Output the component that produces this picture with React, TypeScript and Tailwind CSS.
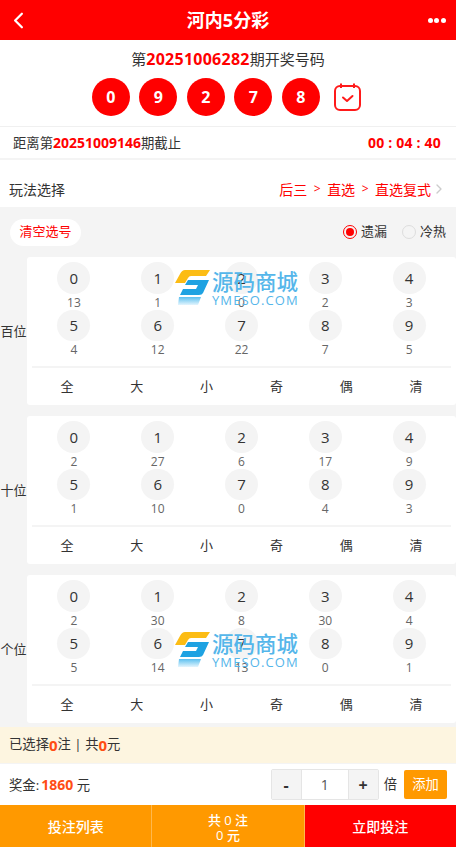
import { ChevronLeft, ChevronRight } from 'lucide-react';

const balls = ['0', '9', '2', '7', '8'];
const actions = ['全', '大', '小', '奇', '偶', '清'];

const positions = [
  { name: '百位', miss: ['13', '1', '0', '2', '3', '4', '12', '22', '7', '5'] },
  { name: '十位', miss: ['2', '27', '6', '17', '9', '1', '10', '0', '4', '3'] },
  { name: '个位', miss: ['2', '30', '8', '30', '4', '5', '14', '13', '0', '1'] },
];

function Watermark({ className, id }: { className: string; id: string }) {
  return (
    <div className={`absolute left-[174px] flex items-start ${className}`}>
      <svg width="37" height="36" viewBox="0 0 37 36">
        <defs>
          <linearGradient id={id} x1="0" y1="0" x2="0" y2="1">
            <stop offset="0" stopColor="#5cc0f0" />
            <stop offset="1" stopColor="#e4f5fd" />
          </linearGradient>
        </defs>
        <path d="M11 0H36L32 6H17Q15 6 14 8L11 13H1L6 4Q8 0 11 0Z" fill="#fcbc14" />
        <path d="M14 10H35L29 23Q28 25 25 25H6L9 19H22L24 15H11Z" fill="#1ea2e2" />
        <path d="M5 27H27L24 35H4Z" fill={`url(#${id})`} />
      </svg>
      <div className="ml-px flex flex-col text-[#55b6ea]">
        <span className="text-[21.5px] leading-[23px] font-medium whitespace-nowrap">源码商城</span>
        <span className="mt-px text-[13px] leading-[12px] tracking-[1.1px] whitespace-nowrap">YMESO.COM</span>
      </div>
    </div>
  );
}

function PositionRow({ name, miss }: { name: string; miss: string[] }) {
  return (
    <div className="flex h-[148px] items-stretch">
      <div className="flex w-[27px] items-center justify-center pt-[2px] text-[13px] whitespace-nowrap text-[#333]">{name}</div>
      <div className="flex flex-1 flex-col rounded-[3px] bg-white px-[5px]">
        <div className="grid h-[109px] grid-cols-5 content-start pt-[5px]">
          {miss.map((value, i) => (
            <div key={i} className="flex h-[47.5px] flex-col items-center">
              <div className="flex h-[33px] w-[33px] items-center justify-center rounded-full bg-[#f4f4f4] text-[15px] text-[#333]">
                {i}
              </div>
              <div className="mt-[2px] text-[12px] leading-[14px] text-[#666]">{value}</div>
            </div>
          ))}
        </div>
        <div className="grid flex-1 grid-cols-6 items-center border-t-2 border-[#f4f4f4] text-center text-[13px] text-[#333]">
          {actions.map((a) => (
            <div key={a}>{a}</div>
          ))}
        </div>
      </div>
    </div>
  );
}

export default function App() {
  return (
    <div className="relative h-[847px] w-[456px] overflow-hidden bg-white font-['Open_Sans','Noto_Sans_CJK_SC',sans-serif] text-[#333]">
      <header className="flex h-10 items-center justify-between bg-[#ff0000] px-[5px] text-white">
        <ChevronLeft className="h-[27px] w-[27px]" strokeWidth={2} />
        <h1 className="text-[18px] font-bold">河内5分彩</h1>
        <div className="flex w-[27px] items-center justify-end gap-[1.5px] pr-[5px]">
          <span className="h-[5px] w-[5px] shrink-0 rounded-full bg-white" />
          <span className="h-[5px] w-[5px] shrink-0 rounded-full bg-white" />
          <span className="h-[5px] w-[5px] shrink-0 rounded-full bg-white" />
        </div>
      </header>

      <section className="flex h-[87px] flex-col items-center border-b border-[#f0f0f0] pt-[8px]">
        <div className="text-[15px] leading-[22px]">
          第<span className="text-[16px] font-bold tracking-[0.25px] text-[#ff0000]">20251006282</span>期开奖号码
        </div>
        <div className="mt-[8px] flex items-center gap-[9.5px] pr-[2px]">
          {balls.map((b, i) => (
            <div key={i} className="flex h-[38px] w-[38px] items-center justify-center rounded-full bg-[#ff0000] text-[16px] font-bold text-white">
              {b}
            </div>
          ))}
          <svg width="29" height="30" viewBox="0 0 29 30" fill="none" stroke="#ff1a1a" strokeWidth="2" className="ml-[4px]">
            <rect x="2" y="4" width="25" height="24" rx="5" />
            <path d="M8 1.5V6M21 1.5V6" />
            <path d="M10 15.5L14 19L19.5 14" strokeLinecap="round" strokeLinejoin="round" />
          </svg>
        </div>
      </section>

      <section className="flex h-[33px] items-center justify-between border-b-2 border-[#f4f4f4] pr-[15px] pl-[13px] text-[13.33px]">
        <div>
          距离第<span className="text-[14px] font-bold text-[#ff0000]">20251009146</span>期截止
        </div>
        <div className="text-[14px] font-bold tracking-[0.2px] text-[#ff0000]">00 : 04 : 40</div>
      </section>

      <section className="flex h-[47px] items-center justify-between pt-[11px] pr-[9px] pl-[9px] text-[14px]">
        <span>玩法选择</span>
        <span className="flex items-center text-[#ff0000]">
          后三<span className="mx-[6.5px] text-[12px]">&gt;</span>直选<span className="mx-[6.5px] text-[12px]">&gt;</span>直选复式
          <ChevronRight className="h-[16px] w-[16px] text-[#ccc]" strokeWidth={2} />
        </span>
      </section>

      <main className="h-[520px] bg-[#f4f4f4]">
        <div className="flex h-[50px] items-center justify-between pr-[10px] pl-[10px] text-[13px]">
          <div className="flex h-[27px] w-[71px] items-center justify-center rounded-full bg-white text-[#ff0000]">清空选号</div>
          <div className="flex items-center">
            <span className="flex h-[14px] w-[14px] items-center justify-center rounded-full border border-[#ff0000]">
              <span className="h-[8px] w-[8px] rounded-full bg-[#ff0000]" />
            </span>
            <span className="ml-[4px]">遗漏</span>
            <span className="ml-[15px] h-[14px] w-[14px] rounded-full border border-[#ddd]" />
            <span className="ml-[4px]">冷热</span>
          </div>
        </div>
        <div className="flex flex-col gap-[11px]">
          {positions.map((p) => (
            <PositionRow key={p.name} name={p.name} miss={p.miss} />
          ))}
        </div>
      </main>

      <Watermark id="wmTop" className="top-[270px]" />
      <Watermark id="wmBottom" className="top-[632px]" />

      <div className="flex h-[36px] items-center bg-[#fdf5e0] pl-[9px] text-[13.33px]">
        已选择<span className="text-[15px] font-bold text-[#ff4d14]">0</span>注 | 共<span className="text-[15px] font-bold text-[#ff4d14]">0</span>元
      </div>

      <div className="flex h-[42px] items-center border-t border-[#f4f4f4] px-[9px] text-[13.33px]">
        <div className="flex-1">
          奖金:<span className="ml-[2px] text-[14px] font-bold text-[#ff4d14]">1860</span> 元
        </div>
        <div className="flex h-[31px] w-[108px] rounded-[2px] border border-[#e5e5e5] text-center">
          <div className="flex w-[29px] items-center justify-center bg-[#f4f4f4] text-[16px] font-bold">-</div>
          <div className="flex flex-1 items-center justify-center border-x border-[#e5e5e5] text-[14px] text-[#555]">1</div>
          <div className="flex w-[29px] items-center justify-center bg-[#f4f4f4] text-[16px] font-bold">+</div>
        </div>
        <span className="ml-[5px]">倍</span>
        <div className="ml-[7px] flex h-[29px] w-[43px] items-center justify-center rounded-[2px] bg-[#ff9900] text-white">添加</div>
      </div>

      <footer className="flex h-[42px] text-[14px] font-medium text-white">
        <div className="flex flex-1 items-center justify-center border-r border-[#ffb84d] bg-[#ff9900]">投注列表</div>
        <div className="flex flex-1 flex-col items-center justify-center border-r border-[#ffb84d] bg-[#ff9900] pt-[3px] text-[13px] leading-[15px]">
          <span>共 0 注</span>
          <span>0 元</span>
        </div>
        <div className="flex flex-1 items-center justify-center bg-[#ff0000]">立即投注</div>
      </footer>
    </div>
  );
}
